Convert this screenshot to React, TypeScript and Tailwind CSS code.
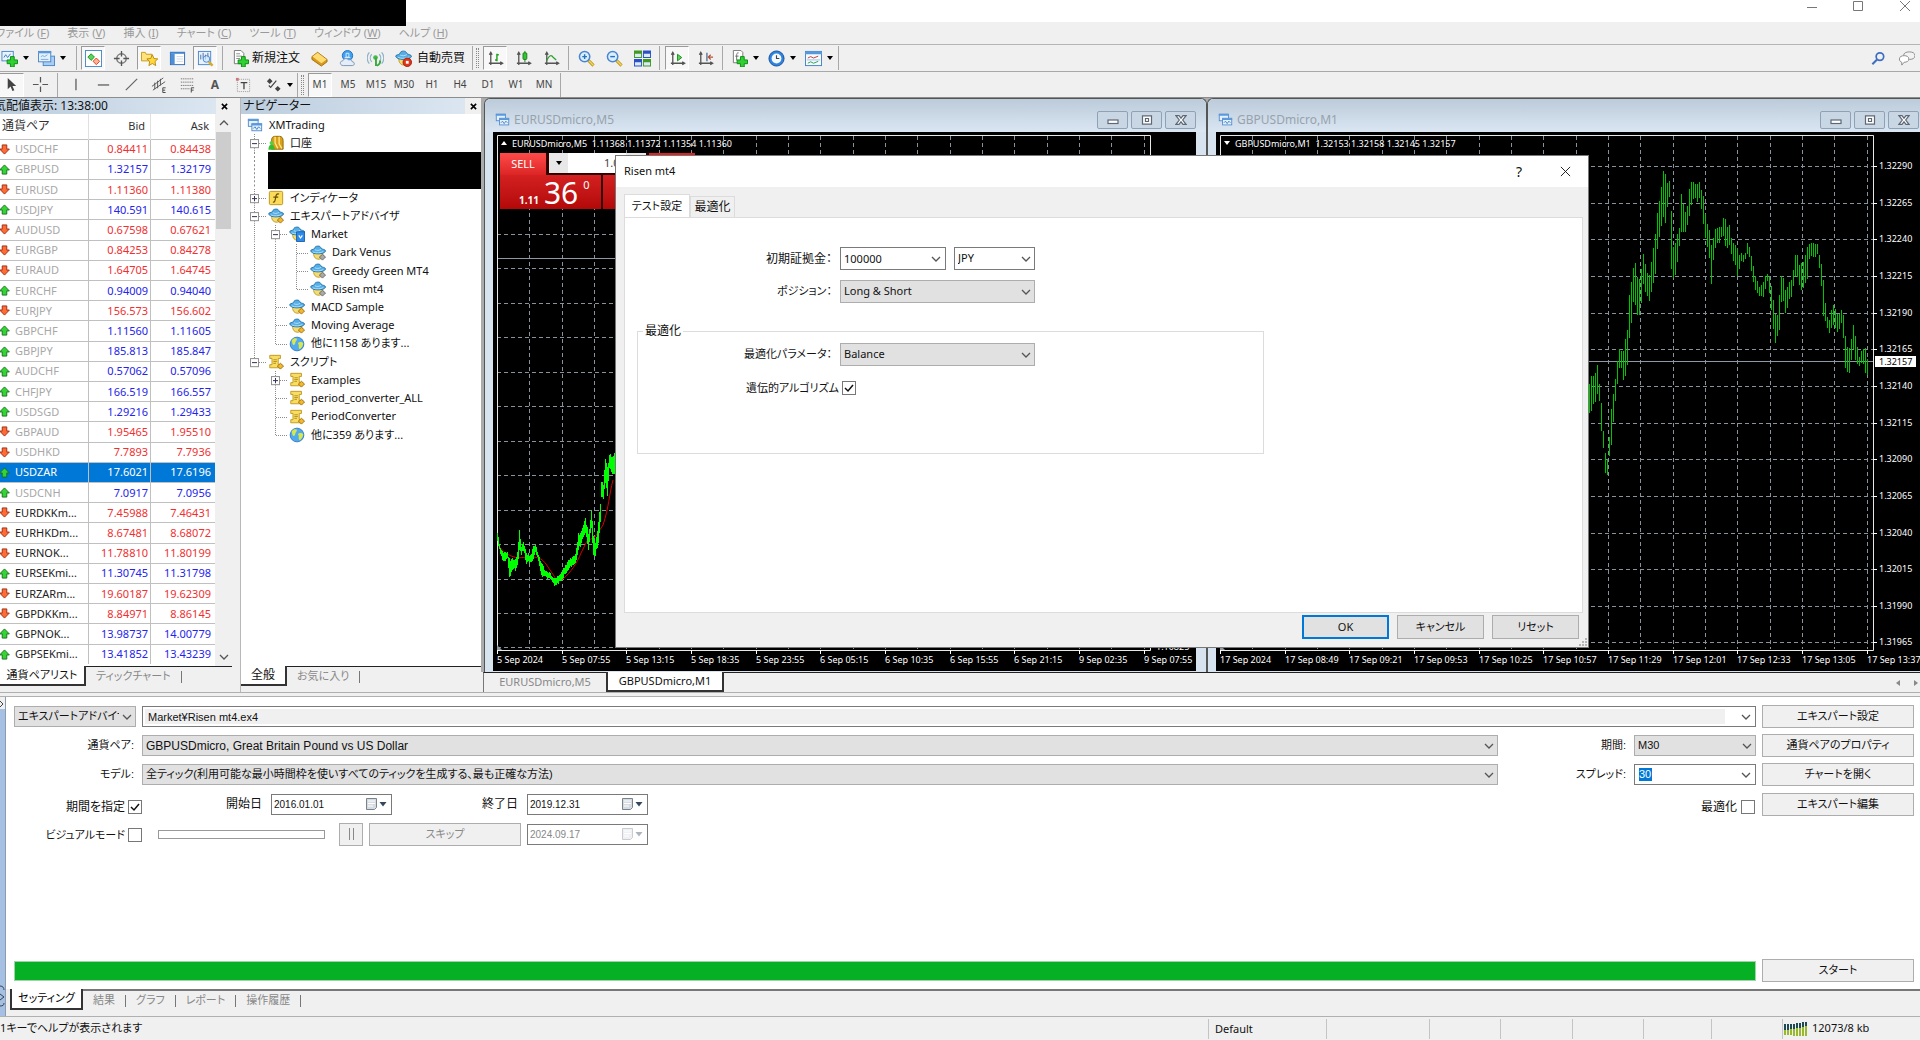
import type { ReactNode } from "react"
import clsx from "clsx"

type Quote = [symbol: string, bid: string, ask: string, dir: "up" | "down", tone?: "dim" | "selected"]

const QUOTES: Quote[] = [
  ["USDCHF", "0.84411", "0.84438", "down", "dim"],
  ["GBPUSD", "1.32157", "1.32179", "up", "dim"],
  ["EURUSD", "1.11360", "1.11380", "down", "dim"],
  ["USDJPY", "140.591", "140.615", "up", "dim"],
  ["AUDUSD", "0.67598", "0.67621", "down", "dim"],
  ["EURGBP", "0.84253", "0.84278", "down", "dim"],
  ["EURAUD", "1.64705", "1.64745", "down", "dim"],
  ["EURCHF", "0.94009", "0.94040", "up", "dim"],
  ["EURJPY", "156.573", "156.602", "down", "dim"],
  ["GBPCHF", "1.11560", "1.11605", "up", "dim"],
  ["GBPJPY", "185.813", "185.847", "up", "dim"],
  ["AUDCHF", "0.57062", "0.57096", "up", "dim"],
  ["CHFJPY", "166.519", "166.557", "up", "dim"],
  ["USDSGD", "1.29216", "1.29433", "up", "dim"],
  ["GBPAUD", "1.95465", "1.95510", "down", "dim"],
  ["USDHKD", "7.7893", "7.7936", "down", "dim"],
  ["USDZAR", "17.6021", "17.6196", "up", "selected"],
  ["USDCNH", "7.0917", "7.0956", "up", "dim"],
  ["EURDKKm...", "7.45988", "7.46431", "down"],
  ["EURHKDm...", "8.67481", "8.68072", "down"],
  ["EURNOK...", "11.78810", "11.80199", "down"],
  ["EURSEKmi...", "11.30745", "11.31798", "up"],
  ["EURZARm...", "19.60187", "19.62309", "down"],
  ["GBPDKKm...", "8.84971", "8.86145", "down"],
  ["GBPNOK...", "13.98737", "14.00779", "up"],
  ["GBPSEKmi...", "13.41852", "13.43239", "up"],
]

const TIMEFRAMES = ["M1", "M5", "M15", "M30", "H1", "H4", "D1", "W1", "MN"]

const MENU = [
  ["ファイル", "F"],
  ["表示", "V"],
  ["挿入", "I"],
  ["チャート", "C"],
  ["ツール", "T"],
  ["ウィンドウ", "W"],
  ["ヘルプ", "H"],
]

/* ── Icons ── */

function Ico({ children, className = "size-[17px]" }: { children: ReactNode; className?: string }) {
  return (
    <svg viewBox="0 0 18 18" fill="none" className={clsx("shrink-0", className)} aria-hidden="true">
      {children}
    </svg>
  )
}

const plus = <path d="M10 7h4v3.500h3.500v4H14V18h-4v-3.500H6.500v-4H10z" fill="#2fd02f" stroke="#0c8a18" />
const lens = (
  <>
    <path d="m11 11 5.500 5.500" stroke="#b8941f" strokeWidth="3.200" />
    <path d="m11.500 11.500 5 5" stroke="#f3d65a" strokeWidth="1.500" />
    <circle cx="7" cy="7" r="5.500" fill="#d9efff" stroke="#4a86cf" strokeWidth="1.600" />
  </>
)
const axes = <path d="M4 3v13M2 14h14M2.500 5 4 2.500 5.500 5M14 12.500l2.500 1.500-2.500 1.500" stroke="#555" strokeWidth="1.400" />
const windows = (
  <>
    <rect x="1.500" y="2.500" width="11" height="8" fill="#e3f0fd" stroke="#4c87c9" />
    <rect x="5.500" y="7.500" width="11" height="8" fill="#e3f0fd" stroke="#4c87c9" />
    <path d="M1 3.500h12M5 8.500h12" stroke="#5a98db" strokeWidth="2" />
    <path d="m7 13 2-2 2 3 2-3 2 2" stroke="#3c7abf" />
  </>
)
// blue wide-brim hat over a yellow head, tilted to the right
const hat = (
  <>
    <path d="M4 9c0 5 2.500 7 6 7 3 0 4.500-3 4.500-7z" fill="#f5dc70" stroke="#b79529" />
    <path d="M.8 6.500C.8 5 3.300 5.500 5 4 5.500 2 7 1.200 9 1.200S12 2 12.500 3.700c1.500 1.300 5 1.300 5 3 0 1.600-4 3.300-8.500 3.300S.8 8.300.8 6.500z" fill="#55aee6" stroke="#2273a8" />
    <path d="M5.500 5.300c2 1.200 5 1 7-.5M3 7.800c4 1.600 9 1.200 12-.4" stroke="#b9e2fa" />
  </>
)
const scroll = (
  <>
    <path d="M2 1.500h12v3.500H11.500v7H14v3.500H2V12h2.500V5H2z" fill="#f8dd62" stroke="#bd9418" />
    <path d="M6 6.500h4M6 8.500h4M6 10.500h3" stroke="#b08a1c" />
  </>
)

const ICONS: Record<string, ReactNode> = {
  newChart: (
    <>
      <rect x="1" y="1.500" width="12" height="10" fill="#e9f3fd" stroke="#4c87c9" />
      <path d="M3 8l2-3 2 3 3-4" stroke="#3c7abf" />
      {plus}
    </>
  ),
  profiles: (
    <>
      <rect x="5.500" y="6.500" width="12" height="10" fill="#a9cdf3" stroke="#4c87c9" />
      <rect x=".5" y="1.500" width="13" height="11" fill="#e3f0fd" stroke="#4c87c9" />
      <path d="M0 2.500h14" stroke="#5a98db" strokeWidth="2" />
      <path d="m3 7 2-1 2 1 3-2M3 10h8" stroke="#7ba9d8" />
    </>
  ),
  market: (
    <>
      <rect x=".5" y=".5" width="17" height="17" fill="#fff" stroke="#4689c9" />
      <path d="m6.500 4 3.500 3.500L6.500 11 3 7.500z" fill="#5bd45b" stroke="#1a941d" />
      <path d="m12 8.500 3.500 3.500L12 15.500 8.500 12z" fill="#ffb199" stroke="#d8431c" />
    </>
  ),
  cross: (
    <>
      <circle cx="9" cy="9" r="5" stroke="#777" strokeWidth="1.500" />
      <path d="M9 1v6M9 11v6M1 9h6M11 9h6" stroke="#555" strokeWidth="1.400" />
    </>
  ),
  favorites: (
    <>
      <path d="M.5 2.500h4l1 2h6v7H.5z" fill="#ffe27a" stroke="#c49a1e" />
      <path d="m12 5 1.700 4 4.100.4-3 2.800.8 4.300-3.600-2.200-3.600 2.200.8-4.300-3-2.800 4.100-.4z" fill="#ffd83d" stroke="#b98a12" />
    </>
  ),
  dataWindow: (
    <>
      <rect x="1.500" y="2.500" width="15" height="13" fill="#fff" stroke="#2f6cb3" />
      <path d="M1 3h16" stroke="#3d83cf" strokeWidth="2" />
      <rect x="2" y="4" width="4" height="11" fill="#4e8fd6" />
      <path d="M8 7h7M8 9.500h7M8 12h7" stroke="#cfd9e4" />
    </>
  ),
  tester: (
    <>
      <rect x="1.500" y="1.500" width="13" height="14" fill="#e7f2fd" stroke="#4c87c9" />
      <path d="M4 5v5M6.500 3v6M9 5v5M11.500 3v5" stroke="#4c6f9c" />
      <circle cx="10" cy="9.500" r="3.500" fill="#cfe8fc" fillOpacity=".7" stroke="#4a86cf" />
      <path d="m12.500 12.500 4 4" stroke="#d6ab2d" strokeWidth="2.500" />
    </>
  ),
  order: (
    <>
      <path d="M2.500.5h7l3 3v11h-10z" fill="#fff" stroke="#777" />
      <path d="M4.500 4h4M4.500 6.500h6M4.500 9h4" stroke="#8a8a8a" />
      {plus}
    </>
  ),
  gold: (
    <>
      <path d="m1 7 6-4.500L17 10v2.500L11 17 1 10z" fill="#d79a1c" stroke="#a4700f" />
      <path d="M1.500 7 7 3l9.500 7-5.500 4z" fill="#ffdc72" />
    </>
  ),
  cloud: (
    <>
      <circle cx="9" cy="6" r="5.500" fill="#3ea0ee" stroke="#1f73c0" />
      <path d="M7.500 3.500h3v4h-3zM6 8h6" stroke="#d8efff" />
      <path d="M4.500 16.500c-4 0-4-5-.5-5 1-3 5-3 6-1 3-1 4 1 4 2 3 0 3 4 0 4z" fill="#e4edf8" stroke="#7b93b5" />
    </>
  ),
  signal: (
    <>
      <path d="M5 4.500a6 6 0 0 0 0 8M2.500 2.500a9 9 0 0 0 0 12M13 4.500a6 6 0 0 1 0 8M15.500 2.500a9 9 0 0 1 0 12" stroke="#8fb3c9" strokeWidth="1.300" />
      <circle cx="9" cy="8" r="2.500" fill="#49b84d" />
      <path d="M9.500 8v9M10.500 16.500c2.500-1 3.500-3 3.500-5.500" stroke="#3aa83e" strokeWidth="2" />
    </>
  ),
  auto: (
    <>
      {hat}
      <circle cx="13" cy="13" r="4.500" fill="#e0361c" stroke="#a3200c" />
      <rect x="11.500" y="11.500" width="3" height="3" fill="#fff" />
    </>
  ),
  bars: (
    <>
      {axes}
      <path d="M10.500 4v8M8.500 10.500h2M10.500 5h2" stroke="#1da11d" strokeWidth="1.500" />
    </>
  ),
  candles: (
    <>
      {axes}
      <path d="M10.500 1v12" stroke="#157a15" />
      <rect x="8.500" y="3" width="4" height="7" rx="1" fill="#32c832" stroke="#157a15" />
    </>
  ),
  line: (
    <>
      {axes}
      <path d="M4 11c3-6 5-6 7-3l3 2.500" stroke="#2da22d" strokeWidth="1.300" />
    </>
  ),
  zoomIn: (
    <>
      {lens}
      <path d="M7 4.500v5M4.500 7h5" stroke="#2d6fbd" strokeWidth="1.500" />
    </>
  ),
  zoomOut: (
    <>
      {lens}
      <path d="M4.500 7h5" stroke="#2d6fbd" strokeWidth="1.500" />
    </>
  ),
  tile: (
    <>
      <path d="M9.500.5H18v8H9.500zM0 9.500h8.500v8H0z" fill="#2a52c4" />
      <path d="M0 .5h8.500v8H0zM9.500 9.500H18v8H9.500z" fill="#3f9a22" />
      <path d="M1 4h6.500v3.500H1zM10.500 4H17v3.500h-6.500zM1 13h6.500v3.500H1zM10.500 13H17v3.500h-6.500z" fill="#dce9f8" />
    </>
  ),
  autoScroll: (
    <>
      {axes}
      <path d="m9 4.500 4.500 3.500L9 11.500z" fill="#5bd45b" stroke="#1b8f1b" />
    </>
  ),
  shift: (
    <>
      {axes}
      <path d="M10.500 3v9" stroke="#5a7a9a" strokeWidth="1.500" />
      <path d="M12 7.500h5M14.500 5 12 7.500l2.500 2.500" stroke="#b5533c" strokeWidth="1.300" />
    </>
  ),
  indicators: (
    <>
      <path d="M2.500.5h8l2 2v11h-10z" fill="#fff" stroke="#777" />
      <path d="M8 3c-2 0-2 1-2 3v5M4.500 6.500H8" stroke="#666" />
      {plus}
    </>
  ),
  clock: (
    <>
      <circle cx="9" cy="9" r="8" fill="#2f83dc" stroke="#174f9b" />
      <circle cx="9" cy="9" r="5.200" fill="#f4f9ff" />
      <path d="M9 5.500V9h3" stroke="#444" strokeWidth="1.200" />
    </>
  ),
  template: (
    <>
      <rect x=".5" y="1.500" width="17" height="15" fill="#f5faff" stroke="#4383c4" />
      <path d="M0 3h18" stroke="#5598dc" strokeWidth="3" />
      <path d="m3 8.500 3-1.500 3 1.500 5-2" stroke="#c0392b" />
      <path d="M2 10.500h14" stroke="#9fc0e2" />
      <path d="m3 14 3-1.500 3 1.500 5-2" stroke="#27a043" />
    </>
  ),
  pointer: <path d="M5 2v12l3-3 2 5 2-1-2-4.500h4z" fill="#444" />,
  crosshair: <path d="M9 1v6M9 11v6M1 9h6M11 9h6" stroke="#555" strokeWidth="1.300" />,
  vline: <path d="M9.500 3v12" stroke="#555" strokeWidth="1.300" />,
  hline: <path d="M3 9.500h12" stroke="#555" strokeWidth="1.300" />,
  trend: <path d="M3 15 15 3" stroke="#666" strokeWidth="1.300" />,
  channel: (
    <>
      <path d="M1 11 13 2M2 15 15 6M4 7v7M7 5v8M10 3v7" stroke="#555" />
      <path d="M15.500 12.500h-3v5h3M12.500 15h2.500" stroke="#444" />
    </>
  ),
  fibo: (
    <>
      <path d="M2 3h14M2 6.500h14M2 10h14M2 13.500h9" stroke="#555" strokeDasharray="1 1" />
      <path d="M16 12.500h-3v5M13 15h2.500" stroke="#444" />
    </>
  ),
  label: (
    <>
      <rect x="2.500" y="3.500" width="13" height="13" stroke="#999" strokeDasharray="1 1" />
      <path d="M6 7h7M9.500 7v7" stroke="#444" strokeWidth="1.400" />
      <path d="M1 2h3v3H1z" fill="#c77" />
    </>
  ),
  shapes: (
    <>
      <path d="m5 2.500 3 3-3 3-3-3zM13.500 10.500l3 3-3 3-3-3z" fill="#444" />
      <path d="m4 10 2 2 6-7" stroke="#444" strokeWidth="1.300" />
    </>
  ),
  search: (
    <>
      <circle cx="10.500" cy="7" r="4" stroke="#3c6fc4" strokeWidth="1.800" />
      <path d="m7.500 10-5 5" stroke="#3c6fc4" strokeWidth="2.200" />
    </>
  ),
  chat: (
    <>
      <path d="M6 5.500C6 3 9 2 12 2s6 1 6 4-3 4-6 4" fill="#f2f2f2" stroke="#888" />
      <path d="M1.500 9.500c0-2.500 2.500-3.500 5-3.500s5 1 5 3.500-2.500 3.500-5 3.500L4 16v-3c-1.500-.5-2.500-1.500-2.500-3.500z" fill="#fff" stroke="#888" />
    </>
  ),
  windows,
  accounts: (
    <>
      <path d="M4 16V6c0-3 1.500-4.500 3.500-4.500H13c2.500 0 4 2 4 5V16z" fill="#d9a018" stroke="#8c6408" />
      <path d="M8 2v7l3 6M12.500 2v8l3 5" stroke="#ffe88a" strokeWidth="1.500" />
      <circle cx="4" cy="9" r="2.200" fill="#51d04b" />
      <path d="M.5 16.500c0-4 1.500-5.500 3.500-5.500s3.500 1.500 3.500 5.500z" fill="#36bb31" />
    </>
  ),
  indicator: (
    <>
      <rect x="1.500" y="1.500" width="15" height="15" rx="1.500" fill="#fbdc5a" stroke="#b98d14" />
      <path d="M12.500 4.500C9.500 3.500 9 6 8.500 9s-.8 5-3 4.500M6 8h5.500" stroke="#6b4d00" strokeWidth="1.300" />
    </>
  ),
  expert: (
    <>
      {hat}
      <path d="m14 10.500 3.500 3-3.500 3.500-3.500-3.500z" fill="#f3b92e" stroke="#9a6b0a" />
    </>
  ),
  expertGray: (
    <>
      {hat}
      <path d="m14 10.500 3.500 3-3.500 3.500-3.500-3.500z" fill="#a9a9a9" stroke="#666" />
    </>
  ),
  marketFolder: (
    <>
      {hat}
      <path d="M8.500 6.500h9v11h-9z" fill="#2f8bea" stroke="#1559a8" />
      <path d="m11 10.500 2 3 2-3" stroke="#fff" strokeWidth="1.300" />
    </>
  ),
  globe: (
    <>
      <circle cx="9" cy="9" r="7.700" fill="#51a9ef" stroke="#2b76bd" />
      <path d="M3 5c2-3 5-3 6-2 0 2-2 3-2 5S5 11 4 9zM10 8c2-2 5-1 6 0 0 3-2 6-4 7-2-2 0-4-2-7z" fill="#d7e84e" />
    </>
  ),
  script: (
    <>
      {scroll}
      <path d="m14 10.500 3.500 3-3.500 3.500-3.500-3.500z" fill="#f3b92e" stroke="#9a6b0a" />
    </>
  ),
}

/* ── Toolbars ── */

function ToolButton({ icon, active, title }: { icon: string; active?: boolean; title: string }) {
  return (
    <button
      type="button"
      aria-label={title}
      className={clsx(
        "mx-[2px] flex h-6 w-6 shrink-0 items-center justify-center",
        active && "border border-t-[#9a9a9a] border-l-[#9a9a9a] border-r-white border-b-white bg-[#f8f8f8]"
      )}
    >
      <Ico>{ICONS[icon]}</Ico>
    </button>
  )
}

function DropButton({ icon, title, className = "w-[37px]" }: { icon: string; title: string; className?: string }) {
  return (
    <button type="button" aria-label={title} className={clsx("flex h-6 shrink-0 items-center", className)}>
      <Ico>{ICONS[icon]}</Ico>
      <span className="ml-[5px] border-x-[3px] border-t-[4px] border-x-transparent border-t-black" />
    </button>
  )
}

const Sep = () => <span className="mx-[3px] h-6 w-px shrink-0 bg-[#a8a8a8]" />
const Grip = () => <span className="mr-[2px] ml-[3px] h-5 w-[3px] shrink-0 border-x border-dotted border-[#888]" />

function Toolbars() {
  return (
    <div className="shrink-0 bg-[#f0f0f0]">
      <div className="flex h-7 items-center border-y border-t-[#b4b4b4] border-b-[#a8a8a8]">
        <span className="w-px" />
        <DropButton icon="newChart" title="新規チャート" />
        <DropButton icon="profiles" title="プロファイル" />
        <span className="ml-px mr-[2px] h-6 w-px bg-[#a8a8a8]" />
        <ToolButton icon="market" active title="気配値表示" />
        <ToolButton icon="cross" title="データウィンドウ" />
        <ToolButton icon="favorites" active title="ナビゲーター" />
        <ToolButton icon="dataWindow" title="ターミナル" />
        <ToolButton icon="tester" active title="ストラテジーテスター" />
        <Sep />
        <button type="button" className="flex w-[79px] items-center gap-[3px] pl-[6px] whitespace-nowrap text-xs">
          <Ico>{ICONS.order}</Ico>
          新規注文
        </button>
        <ToolButton icon="gold" title="MetaEditor" />
        <ToolButton icon="cloud" title="VPS" />
        <ToolButton icon="signal" title="シグナル" />
        <button type="button" className="flex w-[83px] items-center gap-[5px] pl-[6px] whitespace-nowrap text-xs">
          <Ico>{ICONS.auto}</Ico>
          自動売買
        </button>
        <span className="h-6 w-px bg-[#a8a8a8]" />
        <Grip />
        <ToolButton icon="bars" active title="バーチャート" />
        <ToolButton icon="candles" title="ローソク足" />
        <ToolButton icon="line" title="ラインチャート" />
        <Sep />
        <ToolButton icon="zoomIn" title="拡大" />
        <ToolButton icon="zoomOut" title="縮小" />
        <ToolButton icon="tile" title="整列" />
        <Sep />
        <ToolButton icon="autoScroll" active title="自動スクロール" />
        <ToolButton icon="shift" title="チャートシフト" />
        <span className="mr-2 ml-[3px] h-6 w-px bg-[#a8a8a8]" />
        <DropButton icon="indicators" title="インディケータ" />
        <DropButton icon="clock" title="時間足" />
        <DropButton icon="template" title="テンプレート" className="w-[33px]" />
        <span className="h-6 w-px bg-[#a8a8a8]" />
        <span className="flex-1" />
        <ToolButton icon="search" title="検索" />
        <ToolButton icon="chat" title="チャット" />
      </div>
      <div className="flex h-[26px] items-center border-b border-[#8c8c8c]">
        <button type="button" aria-label="カーソル" className="mr-[2px] flex h-6 w-6 items-center justify-center border border-l-0 border-t-[#9a9a9a] border-r-white border-b-white bg-[#f8f8f8]">
          <Ico>{ICONS.pointer}</Ico>
        </button>
        <ToolButton icon="crosshair" title="十字" />
        <Sep />
        <ToolButton icon="vline" title="垂直線" />
        <ToolButton icon="hline" title="水平線" />
        <ToolButton icon="trend" title="トレンドライン" />
        <ToolButton icon="channel" title="チャネル" />
        <ToolButton icon="fibo" title="フィボナッチ" />
        <button type="button" className="w-7 text-xs font-bold text-[#555]">A</button>
        <ToolButton icon="label" title="ラベル" />
        <span className="w-2" />
        <DropButton icon="shapes" title="矢印" className="w-8" />
        <span className="h-6 w-px bg-[#a8a8a8]" />
        <Grip />
        {TIMEFRAMES.map((tf, i) => (
          <button
            key={tf}
            type="button"
            className={clsx(
              "mx-[2px] h-6 w-6 shrink-0 text-center text-[10px] text-[#444]",
              i === 0 && "border border-t-[#9a9a9a] border-l-[#9a9a9a] border-r-white border-b-white bg-[#f8f8f8]"
            )}
          >
            {tf}
          </button>
        ))}
        <span className="ml-[2px] h-6 w-px bg-[#a8a8a8]" />
      </div>
    </div>
  )
}

/* ── Side panels ── */

function PanelTitle({ children }: { children: ReactNode }) {
  return (
    <div className="flex h-4 shrink-0 items-center bg-[#f0f0f0] text-xs leading-4">
      <div className="h-full flex-1 overflow-hidden bg-linear-to-r from-[#bccddd] to-[#dbe6f1] whitespace-nowrap">{children}</div>
      <button type="button" aria-label="閉じる" className="flex w-4 justify-center">
        <svg viewBox="0 0 8 8" className="size-[7px]" stroke="#000" strokeWidth="1.800">
          <path d="m1 1 6 6M7 1 1 7" />
        </svg>
      </button>
    </div>
  )
}

function PanelTabs({ active, other, className }: { active: string; other: string; className: string }) {
  return (
    <div className="flex h-[26px] shrink-0 items-start bg-[#f0f0f0]">
      <button type="button" className={clsx("h-5 border-r-2 border-b-2 border-[#333] bg-white", className)}>
        {active}
      </button>
      <div className="flex h-5 flex-1 items-center gap-[10px] border-t border-[#222] pl-[10px] text-[11px] text-[#888]">
        <button type="button">{other}</button>
        <span className="h-3 w-px bg-[#777]" />
      </div>
    </div>
  )
}

function QuoteArrow({ dir }: { dir: "up" | "down" }) {
  const up = dir === "up"
  return (
    <svg viewBox="0 0 12 12" className="-ml-px size-[11px] shrink-0">
      <path
        d={up ? "M6 1 11.300 6.500H8.500V11h-5V6.500H.7z" : "M6 11 .7 5.500h2.800V1h5v4.500h2.800z"}
        fill={up ? "#35d435" : "#ff6a35"}
        stroke={up ? "#14701a" : "#9a2a0d"}
      />
    </svg>
  )
}

function MarketWatch() {
  return (
    <section className="flex w-[232px] shrink-0 flex-col">
      <PanelTitle>
        <span className="-ml-[6px]">気配値表示: 13:38:00</span>
      </PanelTitle>
      <div className="flex h-[552px] items-start bg-white">
        <table className="h-[550px] flex-1 table-fixed border-collapse text-[11px] leading-4">
          <thead>
            <tr className="h-[25px] text-[#333]">
              <th className="w-[88px] border-r border-[#e0e0e0] pl-[2px] text-left text-xs font-normal">通貨ペア</th>
              <th className="border-r border-[#e0e0e0] pr-[5px] text-right font-normal">Bid</th>
              <th className="pr-[6px] text-right font-normal">Ask</th>
            </tr>
          </thead>
          <tbody>
            {QUOTES.map(([symbol, bid, ask, dir, tone]) => (
              <tr
                key={symbol}
                className={clsx(
                  "border-t border-[#c0c0c0]",
                  tone === "selected" ? "bg-[#0078d7] text-white" : dir === "up" ? "text-[#2424ee]" : "text-[#f03030]"
                )}
              >
                <td className="border-r border-[#c0c0c0] p-0">
                  <span className="flex items-center gap-[5px]">
                    <QuoteArrow dir={dir} />
                    <span className={clsx(tone === "dim" && "text-[#a8a8a8]", !tone && "text-[#222]")}>{symbol}</span>
                  </span>
                </td>
                <td className="border-r border-[#c0c0c0] p-0 pr-[2px] text-right">{bid}</td>
                <td className="p-0 pr-1 text-right">{ask}</td>
              </tr>
            ))}
          </tbody>
        </table>
        <div className="flex h-full w-[17px] flex-col items-center justify-between bg-[#f0f0f0]">
          <Chevron className="mt-1 size-[10px] rotate-180" />
          <div className="mt-1 h-[97px] w-[15px] bg-[#cdcdcd]" />
          <span className="flex-1" />
          <Chevron className="mb-1 size-[10px]" />
        </div>
      </div>
      <PanelTabs active="通貨ペアリスト" other="ティックチャート" className="w-[86px] text-[11px]" />
    </section>
  )
}

function Chevron({ className }: { className?: string }) {
  return (
    <svg viewBox="0 0 10 10" className={clsx("shrink-0", className)} fill="none" stroke="#555" strokeWidth="1.300" aria-hidden="true">
      <path d="m1 3 4 4 4-4" />
    </svg>
  )
}

type Guide = "blank" | "line" | "tee" | "end" | "plus" | "minus" | "minusEnd"

function GuideCell({ kind }: { kind: Guide }) {
  if (kind === "blank") return <span className="w-[21px]" />
  const boxed = kind === "plus" || kind === "minus" || kind === "minusEnd"
  const bottom = kind !== "end" && kind !== "minusEnd"
  return (
    <svg viewBox="0 0 21 18" preserveAspectRatio="none" className="h-full w-[21px]" fill="none" stroke="#8c8c8c">
      <path d={bottom ? "M7.500 0v18" : "M7.500 0v9"} strokeDasharray="1 1" />
      {kind !== "line" && <path d="M8 9.500h11" strokeDasharray="1 1" />}
      {boxed && (
        <>
          <rect x="3.500" y="5.500" width="8" height="8" fill="#fff" stroke="#919191" />
          <path d="M5 9.500h5" stroke="#335" />
          {kind === "plus" && <path d="M7.500 7v5" stroke="#335" />}
        </>
      )}
    </svg>
  )
}

const TREE: { guides: Guide[]; icon: string; label: string; masked?: boolean }[] = [
  { guides: ["minus"], icon: "accounts", label: "口座" },
  { guides: ["line"], icon: "", label: "", masked: true },
  { guides: ["plus"], icon: "indicator", label: "インディケータ" },
  { guides: ["minus"], icon: "expert", label: "エキスパートアドバイザ" },
  { guides: ["line", "minus"], icon: "marketFolder", label: "Market" },
  { guides: ["line", "line", "tee"], icon: "expertGray", label: "Dark Venus" },
  { guides: ["line", "line", "tee"], icon: "expertGray", label: "Greedy Green MT4" },
  { guides: ["line", "line", "end"], icon: "expertGray", label: "Risen mt4" },
  { guides: ["line", "tee"], icon: "expert", label: "MACD Sample" },
  { guides: ["line", "tee"], icon: "expert", label: "Moving Average" },
  { guides: ["line", "end"], icon: "globe", label: "他に1158 あります..." },
  { guides: ["minusEnd"], icon: "script", label: "スクリプト" },
  { guides: ["blank", "plus"], icon: "script", label: "Examples" },
  { guides: ["blank", "tee"], icon: "script", label: "period_converter_ALL" },
  { guides: ["blank", "tee"], icon: "script", label: "PeriodConverter" },
  { guides: ["blank", "end"], icon: "globe", label: "他に359 あります..." },
]

function Navigator() {
  return (
    <section className="ml-2 flex w-[241px] shrink-0 flex-col border-l border-[#b8b8b8]">
      <PanelTitle>
        <span className="pl-[2px]">ナビゲーター</span>
      </PanelTitle>
      <div className="h-[552px] bg-white pt-[2px] pl-[6px] text-[11px]">
        <ul className="flex h-[328px] flex-col">
          <li className="flex min-h-0 flex-1 items-center gap-[6px]">
            <Ico className="size-4">{ICONS.windows}</Ico>
            XMTrading
          </li>
          {TREE.map((node) =>
            node.masked ? (
              <li key="masked" className="flex min-h-0 flex-[2]">
                <GuideCell kind="line" />
                <span className="flex-1 bg-black" />
              </li>
            ) : (
              <li key={node.label} className="flex min-h-0 flex-1 items-center whitespace-nowrap">
                {node.guides.map((kind, i) => (
                  <GuideCell key={i} kind={kind} />
                ))}
                <Ico className="mr-[6px] size-4">{ICONS[node.icon]}</Ico>
                {node.label}
              </li>
            )
          )}
        </ul>
      </div>
      <PanelTabs active="全般" other="お気に入り" className="w-[46px] text-xs" />
    </section>
  )
}

/* ── Charts ── */

// deterministic jitter so the bars look the same on each render
const noise = (n: number) => {
  const v = Math.sin(n * 12.9898) * 43758.5453
  return v - Math.floor(v)
}

function interpolate(points: number[][], x: number, col: number) {
  const i = Math.max(1, points.findIndex((p) => p[0] >= x))
  const [a, b] = [points[i - 1], points[i]]
  return a[col] + ((b[col] - a[col]) * (x - a[0])) / (b[0] - a[0])
}

// x, high, low
const GBP_RANGE = [
  [1589, 380, 414], [1593, 368, 414], [1596, 362, 398], [1598, 366, 396], [1600, 385, 422], [1603, 430, 454],
  [1605, 450, 478], [1607, 453, 482], [1609, 436, 460], [1611, 402, 448], [1614, 384, 412], [1616, 370, 392],
  [1618, 338, 380], [1621, 349, 368], [1624, 345, 388], [1627, 325, 371], [1630, 272, 336], [1632, 272, 312],
  [1634, 249, 298], [1637, 275, 328], [1640, 268, 312], [1643, 248, 285], [1646, 270, 298], [1648, 272, 304],
  [1651, 262, 294], [1654, 240, 290], [1656, 222, 265], [1659, 192, 240], [1662, 172, 225], [1664, 168, 238],
  [1666, 180, 220], [1669, 178, 200], [1671, 205, 272], [1673, 240, 290], [1676, 232, 268], [1679, 222, 252],
  [1681, 182, 240], [1684, 212, 238], [1687, 200, 230], [1690, 181, 212], [1693, 182, 203], [1696, 180, 204],
  [1699, 176, 202], [1702, 190, 220], [1705, 204, 244], [1708, 225, 250], [1711, 230, 292], [1714, 230, 250],
  [1717, 224, 248], [1720, 228, 242], [1723, 212, 240], [1726, 222, 258], [1729, 222, 245], [1732, 238, 265],
  [1735, 240, 272], [1738, 248, 278], [1741, 252, 262], [1744, 254, 264], [1748, 238, 252], [1751, 255, 275],
  [1755, 275, 290], [1759, 286, 298], [1763, 278, 302], [1767, 272, 284], [1770, 275, 300], [1773, 296, 330],
  [1776, 320, 350], [1779, 290, 330], [1782, 264, 300], [1785, 285, 320], [1788, 283, 304], [1792, 275, 296],
  [1796, 248, 275], [1799, 258, 288], [1802, 258, 292], [1806, 250, 288], [1809, 241, 262], [1813, 240, 260],
  [1817, 241, 258], [1820, 256, 278], [1823, 280, 320], [1826, 312, 330], [1829, 318, 335], [1832, 302, 325],
  [1835, 305, 330], [1838, 315, 334], [1842, 302, 325], [1845, 330, 370], [1848, 350, 380], [1851, 338, 365],
  [1853, 322, 350], [1856, 342, 366], [1859, 355, 366], [1863, 345, 365], [1865, 345, 380], [1868, 360, 380],
]

const EUR_RANGE = [
  [497, 532, 542], [500, 546, 556], [503, 552, 564], [507, 550, 560], [509, 556, 580], [512, 556, 570],
  [515, 558, 572], [517, 552, 568], [519, 530, 552], [521, 545, 555], [523, 540, 552], [526, 552, 564],
  [530, 554, 564], [533, 546, 560], [535, 543, 552], [538, 554, 562], [541, 562, 578], [545, 570, 578],
  [550, 572, 580], [554, 578, 587], [558, 574, 584], [562, 570, 580], [566, 562, 574], [570, 558, 568],
  [575, 553, 564], [578, 532, 552], [580, 532, 548], [583, 524, 540], [585, 516, 534], [588, 530, 556],
  [591, 508, 530], [593, 530, 560], [595, 538, 558], [598, 520, 546], [600, 500, 524], [601, 480, 500],
  [603, 480, 500], [605, 455, 490], [607, 465, 498], [609, 453, 470], [611, 452, 474], [616, 452, 474],
]

function ranges(points: number[][], step: number) {
  let d = ""
  for (let x = points[0][0]; x < points[points.length - 1][0]; x += step) {
    const high = interpolate(points, x, 1)
    const low = interpolate(points, x, 2)
    const span = low - high
    d += `M${x + 0.5} ${Math.round(high + noise(x) * span * 0.25)}V${Math.round(low - noise(x + 7) * span * 0.25)}`
  }
  return d
}

interface ChartProps {
  left: number
  axis: number
  width: number
  caption: string
  collapsed?: boolean
  gridTop: number
  gridStep: number
  price: number
  dates: string[]
  children: ReactNode
}

function Chart({ left, axis, width, caption, collapsed, gridTop, gridStep, price, dates, children }: ChartProps) {
  const cols = Array.from({ length: 21 }, (_, i) => Math.round(left + i * 32.34)).filter((x) => x < axis)
  const rows = Array.from({ length: 16 }, (_, i) => Math.round(gridTop + i * gridStep)).filter((y) => y < 649)
  return (
    <svg viewBox={`${left - 4} 132 ${width} 539`} width={width} height="539" className="block shrink-0 bg-black" fill="#fff" fontSize="9">
      <g stroke="#88929a" strokeDasharray="4 3">
        {cols.map((x) => (
          <path key={x} d={`M${x + 0.5} 136V649`} />
        ))}
        {rows.map((y) => (
          <path key={y} d={`M${left} ${y + 0.5}H${axis}`} />
        ))}
      </g>
      <path d={`M${left} ${price}H${axis}`} stroke="#8d9aa5" />
      <path d={`M${left + 0.5} 650.500V135.500H${axis + 0.5}V650.500z`} fill="none" stroke="#e8e8e8" />
      <path d={`M${left} 645l5 5h-5z`} fill="#8d9aa5" />
      {children}
      <path d={collapsed ? `M${left + 4} 145h6l-3-4z` : `M${left + 4} 141h6l-3 4z`} />
      <text x={left + 15} y="147" xmlSpace="preserve">{caption}</text>
      {dates.map((label, i) => (
        <g key={label}>
          <path d={`M${Math.round(left + i * 64.68) + 0.5} 650v4`} stroke="#fff" />
          <text x={Math.round(left + i * 64.68)} y="663">{label}</text>
        </g>
      ))}
    </svg>
  )
}

interface ChartWindowProps {
  title: string
  className: string
  barClass: string
  children: ReactNode
}

function ChartWindow({ title, className, barClass, children }: ChartWindowProps) {
  return (
    <div className={clsx("relative flex flex-col border border-b-0 border-[#555] bg-[#d7e4f0]", className)}>
      <div className={clsx("flex h-[33px] shrink-0 items-center gap-1 bg-linear-to-b from-[#bccbda] to-[#dae6f2] pt-2 pl-[10px] text-xs text-[#98a2ac]", barClass)}>
        <Ico className="size-[15px]">{ICONS.windows}</Ico>
        <span className="flex-1">{title}</span>
        <div className="flex gap-[3px]">
          {["最小化", "最大化", "閉じる"].map((name, i) => (
            <button
              key={name}
              type="button"
              aria-label={name}
              className="flex h-[18px] w-[31px] items-center justify-center rounded-xs border border-[#8fa2b5] bg-[#c9d6e4]"
            >
              <svg viewBox="0 0 12 10" className="h-[10px] w-3" fill="#fff" stroke="#5d6873" strokeWidth="1.200">
                {i === 0 && <rect x="1" y="5" width="10" height="3.500" />}
                {i === 1 && <path d="M1.500.8h9v8.400h-9zM4.500 3.500h3v3h-3z" />}
                {i === 2 && <path d="M1 .7h3l2 2.500 2-2.500h3L7.700 5 11 9.300H8L6 6.800 4 9.300H1L4.300 5z" />}
              </svg>
            </button>
          ))}
        </div>
      </div>
      <div className="ml-2 flex-1 overflow-hidden">{children}</div>
    </div>
  )
}

function OneClickPanel() {
  return (
    <div className="absolute top-[54px] left-[15px] flex w-[195px] flex-col bg-[#300]">
      <div className="flex h-[22px]">
        <button type="button" className="w-[46px] bg-linear-to-b from-[#ff4a4a] to-[#dc2424] text-[11px] text-white">SELL</button>
        <div className="mx-[3px] flex h-5 flex-1 bg-white">
          <span className="flex w-[19px] items-center justify-center bg-[#e8e8e8]">
            <span className="border-x-[3px] border-t-[4px] border-x-transparent border-t-black" />
          </span>
          <input aria-label="数量" defaultValue="1.00" className="w-0 flex-1 pl-9 text-[11px] text-[#444]" />
          <span className="w-5 bg-[#e8e8e8]" />
        </div>
        <button type="button" aria-label="BUY" className="w-[46px] bg-[#dc2424]" />
      </div>
      <div className="flex h-[34px] gap-[2px]">
        <div className="flex flex-1 items-end justify-center gap-[5px] bg-linear-to-b from-[#d42020] to-[#b30808] pb-1 pl-2 leading-none text-white">
          <span className="text-[10px] font-bold">1.11</span>
          <span className="text-[30px] leading-6">36</span>
          <span className="self-start pt-1 text-[11px]">0</span>
        </div>
        <div className="flex-1 bg-linear-to-b from-[#d42020] to-[#b30808]" />
      </div>
    </div>
  )
}

function Workspace() {
  const prices = Array.from({ length: 14 }, (_, i) => (1.3229 - i * 0.00025).toFixed(5))
  return (
    <main className="flex min-w-0 flex-1 flex-col">
      <div className="flex h-[574px] bg-[#ababab] pl-[3px]">
        <ChartWindow title="EURUSDmicro,M5" className="w-[723px] shrink-0 rounded-t-md" barClass="rounded-t-md pr-[10px]">
          <Chart
            left={497}
            axis={1150}
            width={703}
            caption="EURUSDmicro,M5  1.11368 1.11372 1.11354 1.11360"
            collapsed
            gridTop={234}
            gridStep={34.45}
            price={258.5}
            dates={["5 Sep 2024", "5 Sep 07:55", "5 Sep 13:15", "5 Sep 18:35", "5 Sep 23:55", "6 Sep 05:15", "6 Sep 10:35", "6 Sep 15:55", "6 Sep 21:15", "9 Sep 02:35", "9 Sep 07:55"]}
          >
            <path
              d="M498 545c6 8 10 10 16 12s14-1 20 0 8 2 12 7l10 15h7c8-7 14-16 18-26l6-12 8-4 8-12c6-18 6-30 10-45"
              fill="none"
              stroke="#d80000"
            />
            <path d={ranges(EUR_RANGE, 1)} stroke="#00ff00" />
            <text x="1156" y="650">1.10825</text>
          </Chart>
          <OneClickPanel />
        </ChartWindow>
        <ChartWindow title="GBPUSDmicro,M1" className="min-w-0 flex-1 rounded-tl-md border-r-0" barClass="rounded-tl-md pr-px">
          <Chart
            left={1220}
            axis={1873}
            width={704}
            caption="GBPUSDmicro,M1  1.32153 1.32158 1.32145 1.32157"
            gridTop={166}
            gridStep={36.65}
            price={361.5}
            dates={["17 Sep 2024", "17 Sep 08:49", "17 Sep 09:21", "17 Sep 09:53", "17 Sep 10:25", "17 Sep 10:57", "17 Sep 11:29", "17 Sep 12:01", "17 Sep 12:33", "17 Sep 13:05", "17 Sep 13:37"]}
          >
            <path d={ranges(GBP_RANGE, 2)} stroke="#00c400" />
            {prices.map((p, i) => (
              <g key={p}>
                <path d={`M1873 ${Math.round(166 + i * 36.65) + 0.5}h4`} stroke="#fff" />
                <text x="1879" y={Math.round(169 + i * 36.65)}>{p}</text>
              </g>
            ))}
            <rect x="1875" y="356" width="41" height="11" />
            <text x="1879" y="365" fill="#000">1.32157</text>
          </Chart>
        </ChartWindow>
      </div>
      <div className="flex h-5 bg-[#f0f0f0] pl-[2px] text-[11px]">
        <button type="button" className="w-[123px] border-t border-l border-t-[#222] border-l-[#777] text-[#888]">EURUSDmicro,M5</button>
        <button type="button" className="w-[118px] border-2 border-t-0 border-[#333] bg-white">GBPUSDmicro,M1</button>
        <div className="flex flex-1 items-center justify-end gap-[14px] border-t border-[#222] pr-[2px]">
          <span className="border-y-[3px] border-r-[4px] border-y-transparent border-r-[#888]" />
          <span className="border-y-[3px] border-l-[4px] border-y-transparent border-l-[#888]" />
        </div>
      </div>
    </main>
  )
}

/* ── Form controls ── */

function Select({ id, value, className, white }: { id: string; value: string; className?: string; white?: boolean }) {
  return (
    <div className={clsx("relative", className)}>
      <select id={id} className={clsx("size-full appearance-none border pr-4 pl-[3px]", white ? "border-[#7a7a7a] bg-white" : "border-[#adadad] bg-[#e1e1e1]")}>
        <option>{value}</option>
      </select>
      <Chevron className="pointer-events-none absolute inset-y-0 right-1 my-auto size-[10px]" />
    </div>
  )
}

function Combo({ id, value, className, inputClass }: { id: string; value: string; className?: string; inputClass?: string }) {
  return (
    <div className={clsx("flex items-center border border-[#7a7a7a] bg-white pr-1", className)}>
      <input id={id} defaultValue={value} className={clsx("h-full min-w-0 flex-1 pl-[3px] outline-none", inputClass)} />
      <Chevron className="size-[10px]" />
    </div>
  )
}

function Check({ id, checked }: { id: string; checked?: boolean }) {
  return (
    <span className="relative flex size-[14px] shrink-0">
      <input id={id} type="checkbox" defaultChecked={checked} className="size-full appearance-none border border-[#777] bg-white" />
      {checked && (
        <svg viewBox="0 0 14 14" className="pointer-events-none absolute inset-0" fill="none" stroke="#111" strokeWidth="1.500">
          <path d="m3 7 3 3 5-6" />
        </svg>
      )}
    </span>
  )
}

function DateBox({ id, value, disabled }: { id: string; value: string; disabled?: boolean }) {
  return (
    <div className={clsx("flex h-[21px] w-[121px] shrink-0 items-center border border-[#7a7a7a] bg-white pr-1", disabled && "text-[#888]")}>
      <input id={id} defaultValue={value} disabled={disabled} className="h-full min-w-0 flex-1 pl-[2px] text-[10px]" />
      <svg viewBox="0 0 22 14" className={clsx("h-[14px] w-[22px]", disabled && "opacity-40")}>
        <path d="M1.500 1.500h10v9l-2 2h-8z" fill="#d6dbe2" stroke="#7a828c" />
        <path d="M3 4h7M3 6.500h7M3 9h5" stroke="#fff" />
        <path d="M14.500 5h7L18 9.500z" fill="#33475f" />
      </svg>
    </div>
  )
}

function PushButton({ children, className }: { children: ReactNode; className?: string }) {
  return (
    <button type="button" className={clsx("flex h-[23px] items-center justify-center border border-[#adadad] bg-[#f0f0f0] whitespace-nowrap", className)}>
      {children}
    </button>
  )
}

/* ── Strategy tester ── */

function StrategyTester() {
  return (
    <section className="flex min-h-0 flex-1 border-t border-[#b0b0b0] bg-[#f0f0f0] font-['Liberation_Sans','Noto_Sans_CJK_JP',sans-serif] text-[11px]">
      <div className="flex w-[6px] shrink-0 flex-col justify-between overflow-hidden border-r border-[#8c9cb0] bg-[#a5c0e2] pb-2">
        <svg viewBox="0 0 6 12" className="h-3 w-[6px] bg-[#f0f0f0]" stroke="#444">
          <path d="m0 4 3 3-3 3" fill="none" />
        </svg>
        <svg viewBox="0 0 6 24" className="h-6 w-[6px]" stroke="#345" fill="none">
          <path d="M0 2c3 0 4 2 4 4M0 10l4 3-4 3M0 22c3 0 4-1 4-3" />
        </svg>
      </div>
      <div className="flex min-w-0 flex-1 flex-col">
        <div className="flex min-h-0 flex-1 flex-col gap-[6px] bg-white pt-2 pr-[6px] pl-2">
          <div className="flex items-center gap-[6px]">
            <Select id="kind" value="エキスパートアドバイザ" className="h-[21px] w-[122px]" />
            <Combo id="expert" value="Market¥Risen mt4.ex4" className="h-[21px] flex-1" inputClass="mr-4 border-2 border-r-0 border-white bg-[#f0f0f0]" />
            <PushButton className="w-[152px]">エキスパート設定</PushButton>
          </div>
          <div className="flex items-center gap-[6px]">
            <label htmlFor="symbol" className="w-[122px] pr-[2px] text-right">通貨ペア:</label>
            <Select id="symbol" value="GBPUSDmicro, Great Britain Pound vs US Dollar" className="h-[21px] flex-1 text-xs" />
            <label htmlFor="period" className="w-[124px] pr-[2px] text-right">期間:</label>
            <Select id="period" value="M30" className="h-[21px] w-[122px]" />
            <PushButton className="w-[152px]">通貨ペアのプロパティ</PushButton>
          </div>
          <div className="flex items-center gap-[6px]">
            <label htmlFor="model" className="w-[122px] pr-[2px] text-right">モデル:</label>
            <Select id="model" value="全ティック(利用可能な最小時間枠を使いすべてのティックを生成する、最も正確な方法)" className="h-[21px] flex-1" />
            <label htmlFor="spread" className="w-[124px] pr-[2px] text-right">スプレッド:</label>
            <div className="flex h-[21px] w-[122px] items-center border border-[#7a7a7a] bg-white px-1">
              <input id="spread" defaultValue="30" className="w-[13px] bg-[#0078d7] leading-[13px] text-white" />
              <span className="flex-1" />
              <Chevron className="size-[10px]" />
            </div>
            <PushButton className="w-[152px]">チャートを開く</PushButton>
          </div>
          <div className="flex h-6 items-center text-xs">
            <label htmlFor="use-date" className="mr-[3px] w-[111px] pt-[5px] text-right">期間を指定</label>
            <span className="pt-[5px]"><Check id="use-date" checked /></span>
            <label htmlFor="from" className="mr-[9px] ml-20 w-10 text-right">開始日</label>
            <DateBox id="from" value="2016.01.01" />
            <label htmlFor="to" className="mr-[9px] ml-[86px] w-10 text-right">終了日</label>
            <DateBox id="to" value="2019.12.31" />
            <span className="flex-1" />
            <label htmlFor="optimize" className="mr-1 pt-[5px]">最適化</label>
            <span className="pt-[5px]"><Check id="optimize" /></span>
            <PushButton className="ml-[7px] w-[152px] text-[11px]">エキスパート編集</PushButton>
          </div>
          <div className="flex h-6 items-center">
            <label htmlFor="visual" className="mr-[3px] w-[111px] pt-[2px] text-right whitespace-nowrap">ビジュアルモード</label>
            <span className="pt-[2px]"><Check id="visual" /></span>
            <span className="ml-4 h-[9px] w-[167px] border border-[#999] bg-white" />
            <PushButton className="ml-[14px] w-6 text-[#888]">
              <span className="h-3 w-[5px] border-x border-[#888]" />
            </PushButton>
            <PushButton className="mr-[6px] ml-[6px] w-[152px] text-[#888]">スキップ</PushButton>
            <DateBox id="visual-date" value="2024.09.17" disabled />
          </div>
          <div className="mt-auto mb-[7px] flex items-center gap-[6px]">
            <div className="h-5 flex-1 border border-[#9fd4a8] bg-[#06b025]" />
            <PushButton className="w-[152px]">スタート</PushButton>
          </div>
        </div>
        <div className="flex h-[27px] shrink-0 text-[#888]">
          <button type="button" className="ml-1 h-[21px] w-[73px] border-2 border-t-0 border-[#333] bg-white text-black">セッティング</button>
          <div className="flex h-[21px] flex-1 items-center gap-[10px] border-t-2 border-[#777] pl-[10px]">
            {["結果", "グラフ", "レポート", "操作履歴"].map((tab) => (
              <span key={tab} className="flex items-center gap-[10px]">
                <button type="button">{tab}</button>
                <span className="h-3 w-px bg-[#777]" />
              </span>
            ))}
          </div>
        </div>
      </div>
    </section>
  )
}

function StatusBar() {
  return (
    <footer className="flex h-6 shrink-0 items-center border-t border-[#b0b0b0] bg-[#f0f0f0] text-[11px]">
      <span className="flex-1">1キーでヘルプが表示されます</span>
      <span className="w-[118px] border-l border-[#c4c4c4] pl-[6px] leading-5">Default</span>
      <span className="h-5 w-[103px] border-l border-[#c4c4c4]" />
      <span className="h-5 w-[71px] border-l border-[#c4c4c4]" />
      <span className="h-5 w-[72px] border-l border-[#c4c4c4]" />
      <span className="h-5 w-[71px] border-l border-[#c4c4c4]" />
      <span className="h-5 w-[68px] border-l border-[#c4c4c4]" />
      <span className="h-5 w-[71px] border-l border-[#c4c4c4]" />
      <span className="flex h-5 w-[138px] items-center gap-1 border-l border-[#c4c4c4]">
        <svg viewBox="0 0 25 14" className="h-[14px] w-[25px]" strokeWidth="2">
          <path d="M2 2v10M5 2v10M8 2v10M11 2v10M14 1v11M17 1v11M20 0v12M23 0v12" stroke="#1d4a55" />
          <path d="M2 8v5M5 8v5M8 7v6M11 7v7M14 6v8M17 6v8M20 5v9M23 4v10" stroke="#9ab82c" />
        </svg>
        12073/8 kb
      </span>
    </footer>
  )
}

/* ── Expert properties dialog ── */

function ExpertDialog() {
  return (
    <div
      role="dialog"
      aria-label="Risen mt4"
      className="absolute top-[156px] left-[616px] flex h-[491px] w-[972px] flex-col bg-[#f0f0f0] text-xs shadow-[0_0_0_1px_#777]"
    >
      <div className="flex h-[31px] shrink-0 items-center bg-white pl-2">
        <h1 className="flex-1 text-[11px]">Risen mt4</h1>
        <button type="button" className="w-[46px] text-sm">?</button>
        <button type="button" aria-label="閉じる" className="flex w-[46px] justify-center">
          <svg viewBox="0 0 12 12" className="size-[11px]" stroke="#111">
            <path d="m1 1 10 10M11 1 1 11" />
          </svg>
        </button>
      </div>
      <div className="flex flex-1 flex-col px-2 pt-[7px] pr-[5px]">
        <div className="flex items-end">
          <button type="button" className="-mb-px h-6 w-[66px] border border-b-0 border-[#dcdcdc] bg-white text-[11px]">テスト設定</button>
          <button type="button" className="h-[21px] w-[45px] border border-b-0 border-[#dcdcdc]">最適化</button>
        </div>
        <div className="flex flex-1 flex-col border border-[#dcdcdc] bg-white pt-[29px]">
          <div className="flex items-center">
            <label htmlFor="deposit" className="w-[207px] text-right">初期証拠金：</label>
            <Combo id="deposit" value="100000" className="ml-2 h-[23px] w-[106px] text-[11px]" />
            <Select id="currency" value="JPY" white className="ml-2 h-[23px] w-[81px] text-[11px]" />
          </div>
          <div className="mt-[10px] flex items-center text-[11px]">
            <label htmlFor="position" className="w-[207px] text-right">ポジション：</label>
            <Select id="position" value="Long & Short" className="ml-2 h-[23px] w-[195px]" />
          </div>
          <fieldset className="mt-5 ml-3 h-[131px] w-[627px] border border-[#dcdcdc] text-[11px]">
            <legend className="ml-[5px] px-[2px] text-xs">最適化</legend>
            <div className="mt-1 flex items-center">
              <label htmlFor="param" className="w-[194px] text-right">最適化パラメータ：</label>
              <Select id="param" value="Balance" className="ml-2 h-[23px] w-[195px]" />
            </div>
            <div className="mt-[15px] flex items-center gap-[3px]">
              <label htmlFor="genetic" className="w-[201px] text-right">遺伝的アルゴリズム</label>
              <Check id="genetic" checked />
            </div>
          </fieldset>
        </div>
      </div>
      <div className="flex h-[34px] shrink-0 justify-end gap-2 pt-[2px] text-[11px]">
        <button type="button" className="h-6 w-[87px] border-2 border-[#0078d7] bg-[#e1e1e1]">OK</button>
        <button type="button" className="h-6 w-[87px] border border-[#adadad] bg-[#e1e1e1]">キャンセル</button>
        <button type="button" className="h-6 w-[87px] border border-[#adadad] bg-[#e1e1e1]">リセット</button>
        <svg viewBox="0 0 9 9" className="-ml-2 size-[9px] self-end" fill="#b5b5b5">
          <path d="M6 0h2v2H6zM3 3h2v2H3zM6 3h2v2H6zM0 6h2v2H0zM3 6h2v2H3zM6 6h2v2H6z" />
        </svg>
      </div>
    </div>
  )
}

export default function App() {
  return (
    <div className="relative flex h-screen flex-col overflow-hidden bg-[#f0f0f0] font-['Noto_Sans','Noto_Sans_CJK_JP',sans-serif] text-[#111] [font-feature-settings:'palt']">
      <header className="shrink-0">
        <div className="flex h-[22px] items-start bg-white">
          <span className="relative z-10 h-[26px] w-[406px] bg-black" />
          <span className="flex-1" />
          <svg viewBox="0 0 130 22" className="h-[22px] w-[130px]" fill="none" stroke="#777">
            <path d="M17 7.500h10M63.500 1.500h9v9h-9zM110 1l10 10M120 1l-10 10" />
          </svg>
        </div>
        <nav className="flex h-[22px] items-center gap-[18px] bg-[#f0f0f0] text-[11px] text-[#999]">
          {MENU.map(([name, key], i) => (
            <button key={name} type="button" className={clsx("whitespace-nowrap", i === 0 && "-ml-1")}>
              {name} (<u>{key}</u>)
            </button>
          ))}
        </nav>
      </header>
      <Toolbars />
      <div className="flex shrink-0">
        <MarketWatch />
        <Navigator />
        <Workspace />
      </div>
      <div className="h-1 shrink-0 border-t border-[#b0b0b0]" />
      <StrategyTester />
      <StatusBar />
      <ExpertDialog />
    </div>
  )
}
